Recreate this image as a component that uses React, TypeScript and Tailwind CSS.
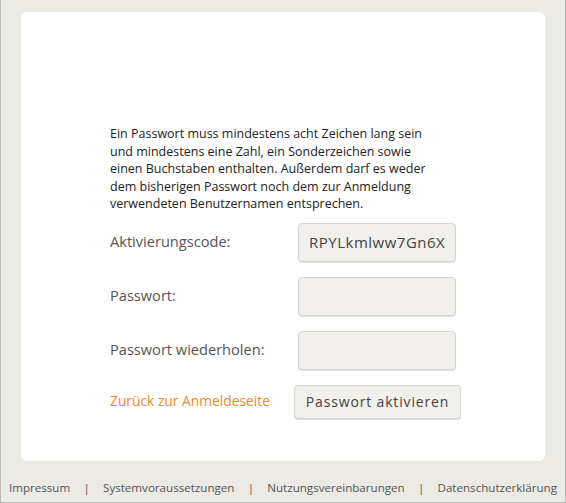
export default function App() {
  const fields = [
    { label: "Aktivierungscode:", value: "RPYLkmlww7Gn6X" },
    { label: "Passwort:", value: "" },
    { label: "Passwort wiederholen:", value: "" },
  ];
  const links = ["Impressum", "Systemvoraussetzungen", "Nutzungsvereinbarungen", "Datenschutzerklärung"];

  return (
    <div
      className="flex h-[503px] w-[566px] flex-col border-x border-b border-[#b9b9b6] bg-[#ebeae5] text-[#333]"
      style={{ fontFamily: '"Open Sans", "Noto Sans", sans-serif' }}
    >
      <div className="mx-[20px] mt-[12px] h-[449px] shrink-0 rounded-[6px] bg-white pl-[89px] pt-[113px]">
        <p className="w-[330px] text-[12.5px] leading-[17.5px] text-[#222]">
          Ein Passwort muss mindestens acht Zeichen lang sein und mindestens eine Zahl, ein Sonderzeichen sowie
          einen Buchstaben enthalten. Außerdem darf es weder dem bisherigen Passwort noch dem zur Anmeldung
          verwendeten Benutzernamen entsprechen.
        </p>
        <div className="mt-[10px] flex flex-col gap-[15px]">
          {fields.map((f) => (
            <div key={f.label} className="flex items-center">
              <label className="w-[188px] text-[14.6px] text-[#555]">{f.label}</label>
              <input
                readOnly
                defaultValue={f.value}
                className="h-[39px] w-[158px] rounded-[4px] border border-[#d6d4cf] bg-[#f1f0ec] px-[10px] text-[15px] tracking-[0.5px] text-[#444] shadow-[0_1px_1px_rgba(0,0,0,0.12)] outline-none"
              />
            </div>
          ))}
          <div className="flex items-center">
            <a href="#" className="w-[184px] text-[13.8px] text-[#f0892c]">
              Zurück zur Anmeldeseite
            </a>
            <button className="h-[34px] w-[167px] rounded-[4px] border border-[#d6d4cf] bg-[#f1f0ec] text-[14px] tracking-[0.06em] text-[#444] shadow-[0_1px_1px_rgba(0,0,0,0.15)]">
              Passwort aktivieren
            </button>
          </div>
        </div>
      </div>
      <div className="flex flex-1 items-center justify-between px-[8px] pt-[12px] text-[11.6px] text-[#555]">
        {links.map((l, i) => (
          <span key={l} className="contents">
            {i > 0 && <span>|</span>}
            <a href="#">{l}</a>
          </span>
        ))}
      </div>
    </div>
  );
}
